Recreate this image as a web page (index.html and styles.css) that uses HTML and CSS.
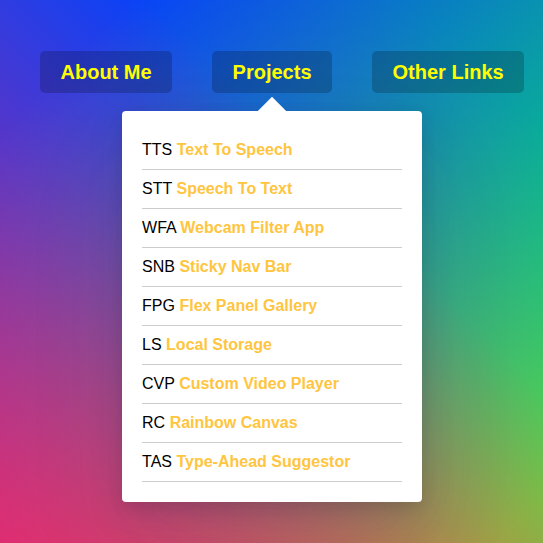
FILE: index.html
```html
<!DOCTYPE html>
<html lang="en">
<head>
<meta charset="utf-8">
<title>Nav</title>
<link rel="stylesheet" href="styles.css">
</head>
<body>
<nav class="top">
  <ul class="cool">
    <li class="nav-item"><a class="nav-link" href="#">About Me</a></li>
    <li class="nav-item">
      <a class="nav-link" href="#">Projects</a>
      <div class="dropdown">
        <span class="arrow"></span>
        <ul class="proj-list">
          <li class="proj"><span class="code">TTS</span> <a class="name" href="#">Text To Speech</a></li>
          <li class="proj"><span class="code">STT</span> <a class="name" href="#">Speech To Text</a></li>
          <li class="proj"><span class="code">WFA</span> <a class="name" href="#">Webcam Filter App</a></li>
          <li class="proj"><span class="code">SNB</span> <a class="name" href="#">Sticky Nav Bar</a></li>
          <li class="proj"><span class="code">FPG</span> <a class="name" href="#">Flex Panel Gallery</a></li>
          <li class="proj"><span class="code">LS</span> <a class="name" href="#">Local Storage</a></li>
          <li class="proj"><span class="code">CVP</span> <a class="name" href="#">Custom Video Player</a></li>
          <li class="proj"><span class="code">RC</span> <a class="name" href="#">Rainbow Canvas</a></li>
          <li class="proj"><span class="code">TAS</span> <a class="name" href="#">Type-Ahead Suggestor</a></li>
        </ul>
      </div>
    </li>
    <li class="nav-item"><a class="nav-link" href="#">Other Links</a></li>
  </ul>
</nav>
</body>
</html>
```
FILE: styles.css
```css
html {
  box-sizing: border-box;
  min-height: 100vh;
  font-family: "Liberation Sans", Arial, sans-serif;
  background:
    linear-gradient(45deg, hsla(340, 100%, 55%, 1) 0%, hsla(340, 100%, 55%, 0) 70%),
    linear-gradient(135deg, hsla(225, 95%, 50%, 1) 10%, hsla(225, 95%, 50%, 0) 80%),
    linear-gradient(225deg, hsla(140, 90%, 50%, 1) 10%, hsla(140, 90%, 50%, 0) 80%),
    linear-gradient(315deg, hsla(35, 95%, 55%, 1) 100%, hsla(35, 95%, 55%, 0) 70%);
  background-size: 100% 760px;
  background-repeat: no-repeat;
  background-color: hsl(35, 95%, 55%);
}
*, *::before, *::after { box-sizing: inherit; }
body {
  margin: 0;
  min-height: 100vh;
}
.top { position: relative; }
.cool {
  display: flex;
  list-style: none;
  margin: 0;
  padding: 51px 0 0 20px;
}
.nav-item {
  position: relative;
  flex: 0 0 auto;
  margin: 0 20px;
}
.nav-link {
  display: inline-block;
  color: yellow;
  text-decoration: none;
  white-space: nowrap;
  font-size: 20px;
  font-weight: bold;
  line-height: 22px;
  padding: 10px 20.5px;
  background: rgba(0, 0, 0, 0.2);
  border-radius: 5px;
}
.dropdown {
  position: absolute;
  top: 60px;
  left: 50%;
  transform: translateX(-50%);
  width: 300px;
  background: #fff;
  border-radius: 4px;
  padding: 20px;
  box-shadow: 0 50px 100px rgba(50, 50, 93, 0.1), 0 15px 35px rgba(50, 50, 93, 0.15), 0 5px 15px rgba(0, 0, 0, 0.1);
}
.arrow {
  position: absolute;
  top: 0;
  left: 50%;
  width: 20px;
  height: 20px;
  margin-left: -10px;
  background: #fff;
  transform: translateY(-50%) rotate(45deg);
}
.proj-list {
  list-style: none;
  margin: 0;
  padding: 0;
  position: relative;
}
.proj {
  padding: 10px 0;
  line-height: 18px;
  font-size: 16px;
  border-bottom: 1px solid #ccc;
  white-space: nowrap;
}
.code { color: #000; }
.name {
  color: #ffc540;
  font-weight: bold;
  text-decoration: none;
}
```
